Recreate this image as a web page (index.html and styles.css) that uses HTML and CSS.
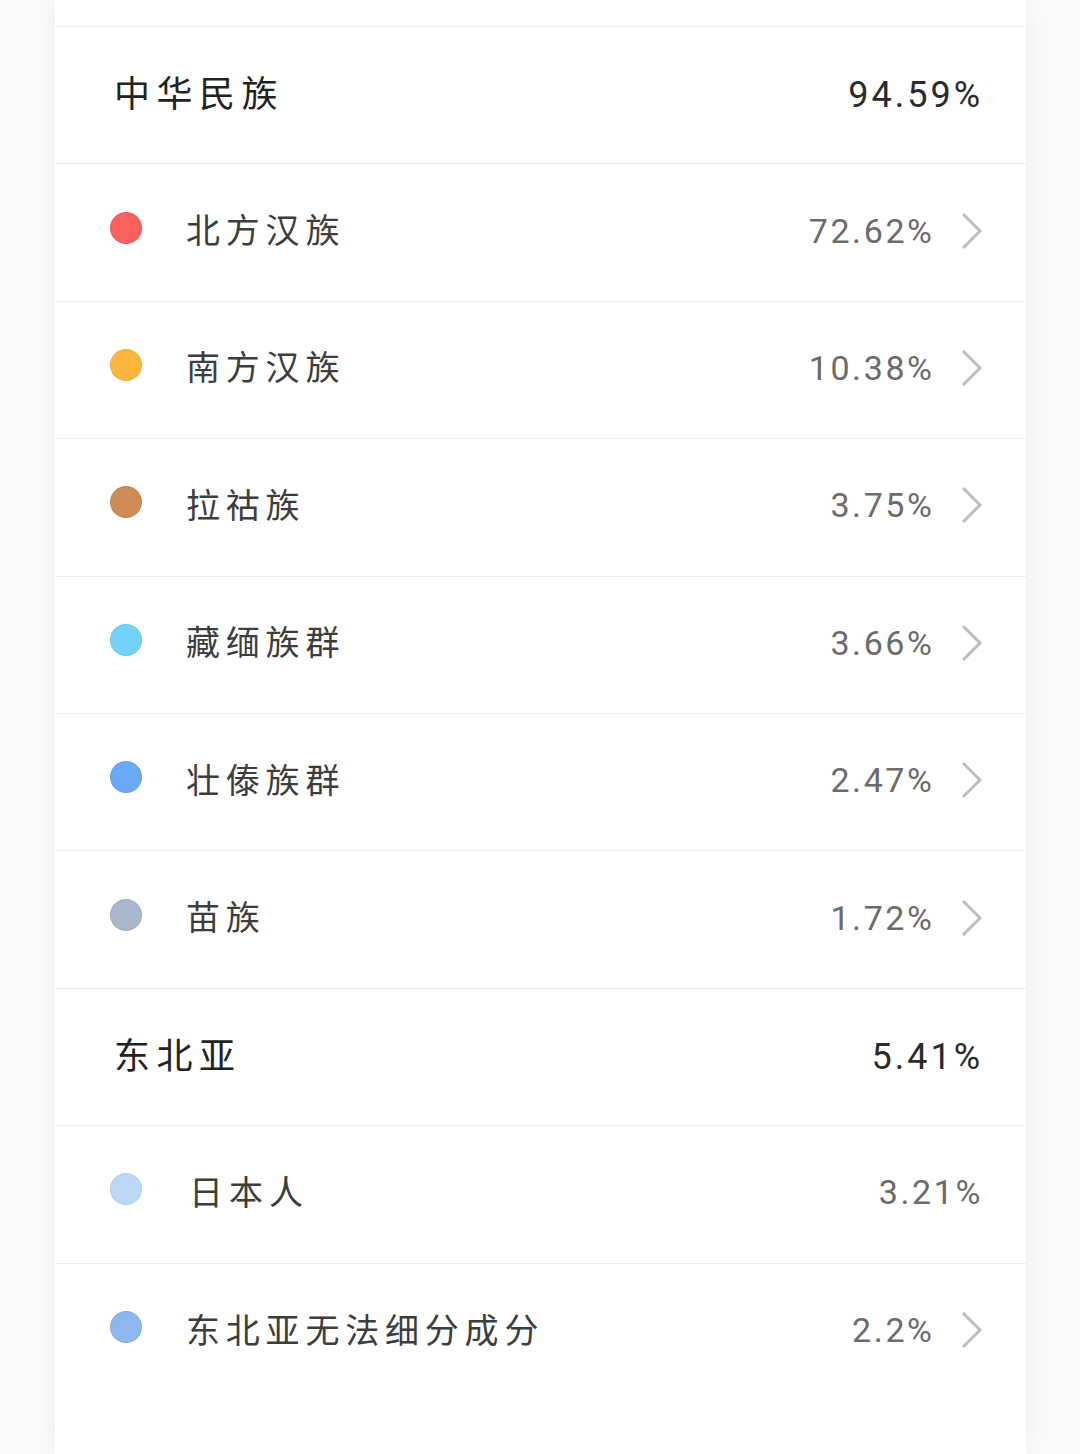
FILE: index.html
```html
<!DOCTYPE html>
<html lang="zh">
<head>
<meta charset="utf-8">
<link rel="stylesheet" href="styles.css">
</head>
<body>
<div class="card">
  <div class="stub"></div>
  <div class="row head"><span class="name">中华民族</span><span class="val">94.59%</span></div>
  <div class="row sub"><span class="dot c1"></span><span class="label">北方汉族</span><span class="pct">72.62%</span><svg class="chev" viewBox="0 0 22 38"><polyline points="2,2 19,19 2,36"/></svg></div>
  <div class="row sub"><span class="dot c2"></span><span class="label">南方汉族</span><span class="pct">10.38%</span><svg class="chev" viewBox="0 0 22 38"><polyline points="2,2 19,19 2,36"/></svg></div>
  <div class="row sub"><span class="dot c3"></span><span class="label">拉祜族</span><span class="pct">3.75%</span><svg class="chev" viewBox="0 0 22 38"><polyline points="2,2 19,19 2,36"/></svg></div>
  <div class="row sub"><span class="dot c4"></span><span class="label">藏缅族群</span><span class="pct">3.66%</span><svg class="chev" viewBox="0 0 22 38"><polyline points="2,2 19,19 2,36"/></svg></div>
  <div class="row sub"><span class="dot c5"></span><span class="label">壮傣族群</span><span class="pct">2.47%</span><svg class="chev" viewBox="0 0 22 38"><polyline points="2,2 19,19 2,36"/></svg></div>
  <div class="row sub"><span class="dot c6"></span><span class="label">苗族</span><span class="pct">1.72%</span><svg class="chev" viewBox="0 0 22 38"><polyline points="2,2 19,19 2,36"/></svg></div>
  <div class="row head"><span class="name">东北亚</span><span class="val">5.41%</span></div>
  <div class="row sub nochev"><span class="dot c7"></span><span class="label wide">日本人</span><span class="pct">3.21%</span></div>
  <div class="row sub last"><span class="dot c8"></span><span class="label">东北亚无法细分成分</span><span class="pct">2.2%</span><svg class="chev" viewBox="0 0 22 38"><polyline points="2,2 19,19 2,36"/></svg></div>
</div>
</body>
</html>
```
FILE: styles.css
```css
html, body {
  margin: 0;
  padding: 0;
}
body {
  background: #fafafa;
  width: 1080px;
  height: 1454px;
  overflow: hidden;
  font-family: "Noto Sans CJK SC", "Noto Sans", sans-serif;
}
.card {
  margin-left: 55px;
  width: 971px;
  height: 1454px;
  background: #fff;
  box-shadow: 0 0 28px rgba(0, 0, 0, 0.06);
}
.stub {
  height: 27px;
  box-sizing: border-box;
  border-bottom: 1.5px solid #eeeeee;
}
.row {
  display: flex;
  align-items: center;
  height: 137.4px;
  box-sizing: border-box;
  border-bottom: 1.5px solid #eeeeee;
}
.row.last {
  border-bottom: none;
}
.head {
  padding: 0 46px 0 59px;
}
.name {
  flex: 1;
  font-size: 36px;
  letter-spacing: 6.5px;
  color: #222;
  padding-bottom: 8px;
}
.val {
  font-family: Roboto, "Noto Sans", sans-serif;
  font-size: 36px;
  letter-spacing: 3px;
  margin-right: -3px;
  color: #2a2a2a;
}
.sub {
  padding: 0 43px 4px 55px;
}
.dot {
  width: 32px;
  height: 32px;
  border-radius: 50%;
  flex: none;
  margin-right: 45px;
  margin-bottom: 6px;
  box-sizing: border-box;
  border: 1px solid rgba(0, 0, 0, 0.06);
}
.c1 { background: #fc6160; }
.c2 { background: #fdb73e; }
.c3 { background: #d08a54; }
.c4 { background: #73d2fa; }
.c5 { background: #6aa9f6; }
.c6 { background: #a9b7cc; }
.c7 { background: #bdd8f6; }
.c8 { background: #8db7ee; }
.label {
  flex: 1;
  font-size: 34px;
  letter-spacing: 5.8px;
  color: #3d3d3d;
  padding-bottom: 4px;
  margin-left: -1px;
}
.label.wide {
  letter-spacing: 6px;
  margin-left: 2px;
}
.pct {
  font-family: Roboto, "Noto Sans", sans-serif;
  font-size: 34px;
  letter-spacing: 2.6px;
  color: #6b6b6b;
  margin-right: -2.6px;
}
.nochev .pct {
  margin-right: 0;
}
.chev {
  width: 22px;
  height: 38px;
  margin-left: 29px;
  flex: none;
}
.chev polyline {
  fill: none;
  stroke: #bdbdbd;
  stroke-width: 3;
}
```
